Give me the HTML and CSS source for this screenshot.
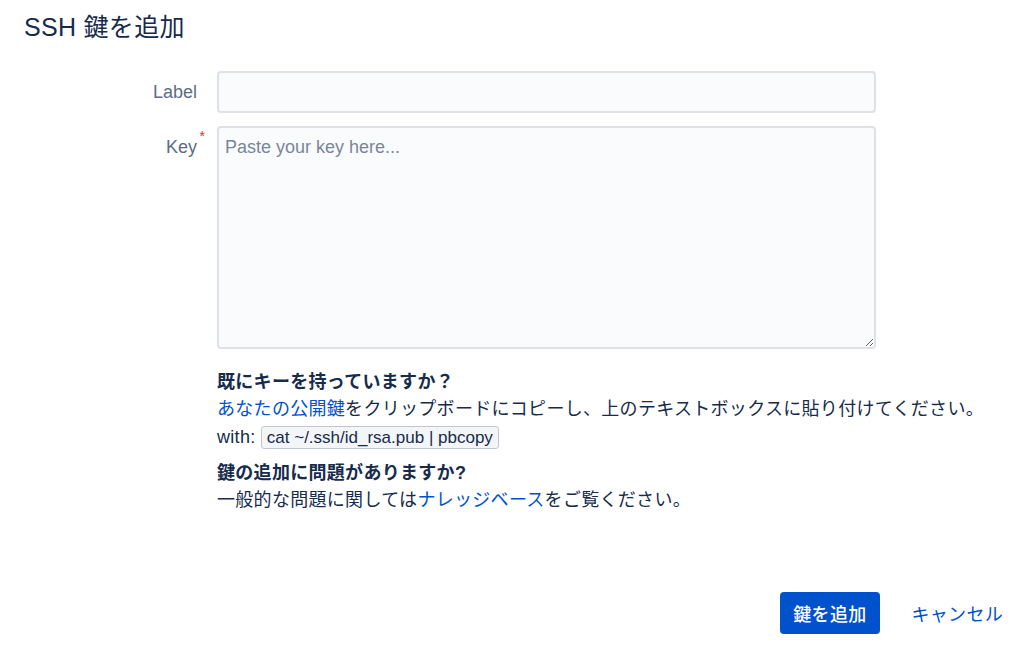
FILE: index.html
```html
<!DOCTYPE html>
<html lang="ja">

<head>
    <meta charset="UTF-8">
    <meta name="viewport" content="width=device-width, initial-scale=1.0">
    <title>SSH 鍵を追加</title>
    <link rel="stylesheet" href="styles.css">
</head>

<body>

    <h2 class="title">SSH 鍵を追加</h2>

    <form class="keyform">
        <div class="fieldrow">
            <label class="fieldlabel" for="label">Label</label>
            <input class="textfield" id="label" type="text">
        </div>
        <div class="fieldrow">
            <label class="fieldlabel" for="key">Key<span class="required">*</span></label>
            <textarea class="textfield keyarea" id="key" placeholder="Paste your key here..."></textarea>
        </div>

        <div class="helptext">
            <div class="helpblock">
                <p class="helphead">既にキーを持っていますか？</p>
                <p><a href="#">あなたの公開鍵</a>をクリップボードにコピーし、上のテキストボックスに貼り付けてください。</p>
                <p class="cmdline">with: <code class="cmd">cat ~/.ssh/id_rsa.pub | pbcopy</code></p>
            </div>
            <div class="helpblock">
                <p class="helphead">鍵の追加に問題がありますか?</p>
                <p>一般的な問題に関しては<a href="#">ナレッジベース</a>をご覧ください。</p>
            </div>
        </div>
    </form>

    <div class="footer">
        <button class="primarybutton" type="button">鍵を追加</button>
        <button class="linkbutton" type="button">キャンセル</button>
    </div>

</body>

</html>
```

FILE: styles.css
```css
body {
    margin: 0;
    padding: 0;
    background-color: white;
    color: #172B4D;
    font-family: "Liberation Sans", "Noto Sans CJK JP", sans-serif;
    font-size: 18px;
    line-height: 27px;
}

.title {
    margin: 0;
    padding: 12px 24px 0 24px;
    font-size: 25px;
    line-height: 30px;
    font-weight: normal;
    letter-spacing: 0.3px;
    color: #172B4D;
}

.keyform {
    margin: 29px 0 0 0;
    padding: 0 148px 0 24px;
}

.fieldrow {
    display: grid;
    grid-template-columns: 173px 1fr;
    column-gap: 20px;
    margin-bottom: 13px;
}

.fieldlabel {
    position: relative;
    text-align: right;
    line-height: 42px;
    color: #5E6C84;
}

.required {
    position: absolute;
    right: -8px;
    top: -11px;
    color: #DE350B;
    font-size: 14px;
}

.textfield {
    box-sizing: border-box;
    width: 100%;
    height: 42px;
    margin: 0;
    padding: 7px 6px;
    border: 2px solid #DFE1E6;
    border-radius: 4px;
    background-color: #FAFBFC;
    font-family: "Liberation Sans", "Noto Sans CJK JP", sans-serif;
    font-size: 18px;
    line-height: 25px;
    color: #172B4D;
}

.keyarea {
    height: 223px;
    resize: vertical;
}

.textfield::placeholder {
    color: #7A869A;
}

.helptext {
    margin: 20px -140px 0 193px;
    white-space: nowrap;
    letter-spacing: 0.3px;
}

.helpblock {
    margin-bottom: 9px;
}

.helpblock p {
    margin: 0;
}

.helphead {
    font-weight: bold;
}

.cmdline {
    padding-top: 1px;
}

.helptext a {
    color: #0052CC;
    text-decoration: none;
}

.cmd {
    display: inline-block;
    padding: 0 5px;
    line-height: 21px;
    border: 1px solid #C1C7D0;
    border-radius: 3px;
    background-color: #F4F5F7;
    font-family: "Liberation Sans", sans-serif;
    font-size: 17px;
    letter-spacing: 0;
    color: #172B4D;
}

.footer {
    display: flex;
    justify-content: flex-end;
    gap: 20px;
    margin-top: 78px;
    padding-right: 9px;
}

.primarybutton,
.linkbutton {
    height: 42px;
    border: none;
    border-radius: 4px;
    font-family: "Liberation Sans", "Noto Sans CJK JP", sans-serif;
    font-size: 18px;
    letter-spacing: 0.3px;
    cursor: pointer;
}

.primarybutton {
    padding: 0 13px;
    background-color: #0052CC;
    color: white;
    font-weight: 500;
}

.linkbutton {
    padding: 0 12px;
    background-color: transparent;
    color: #0052CC;
}
```
